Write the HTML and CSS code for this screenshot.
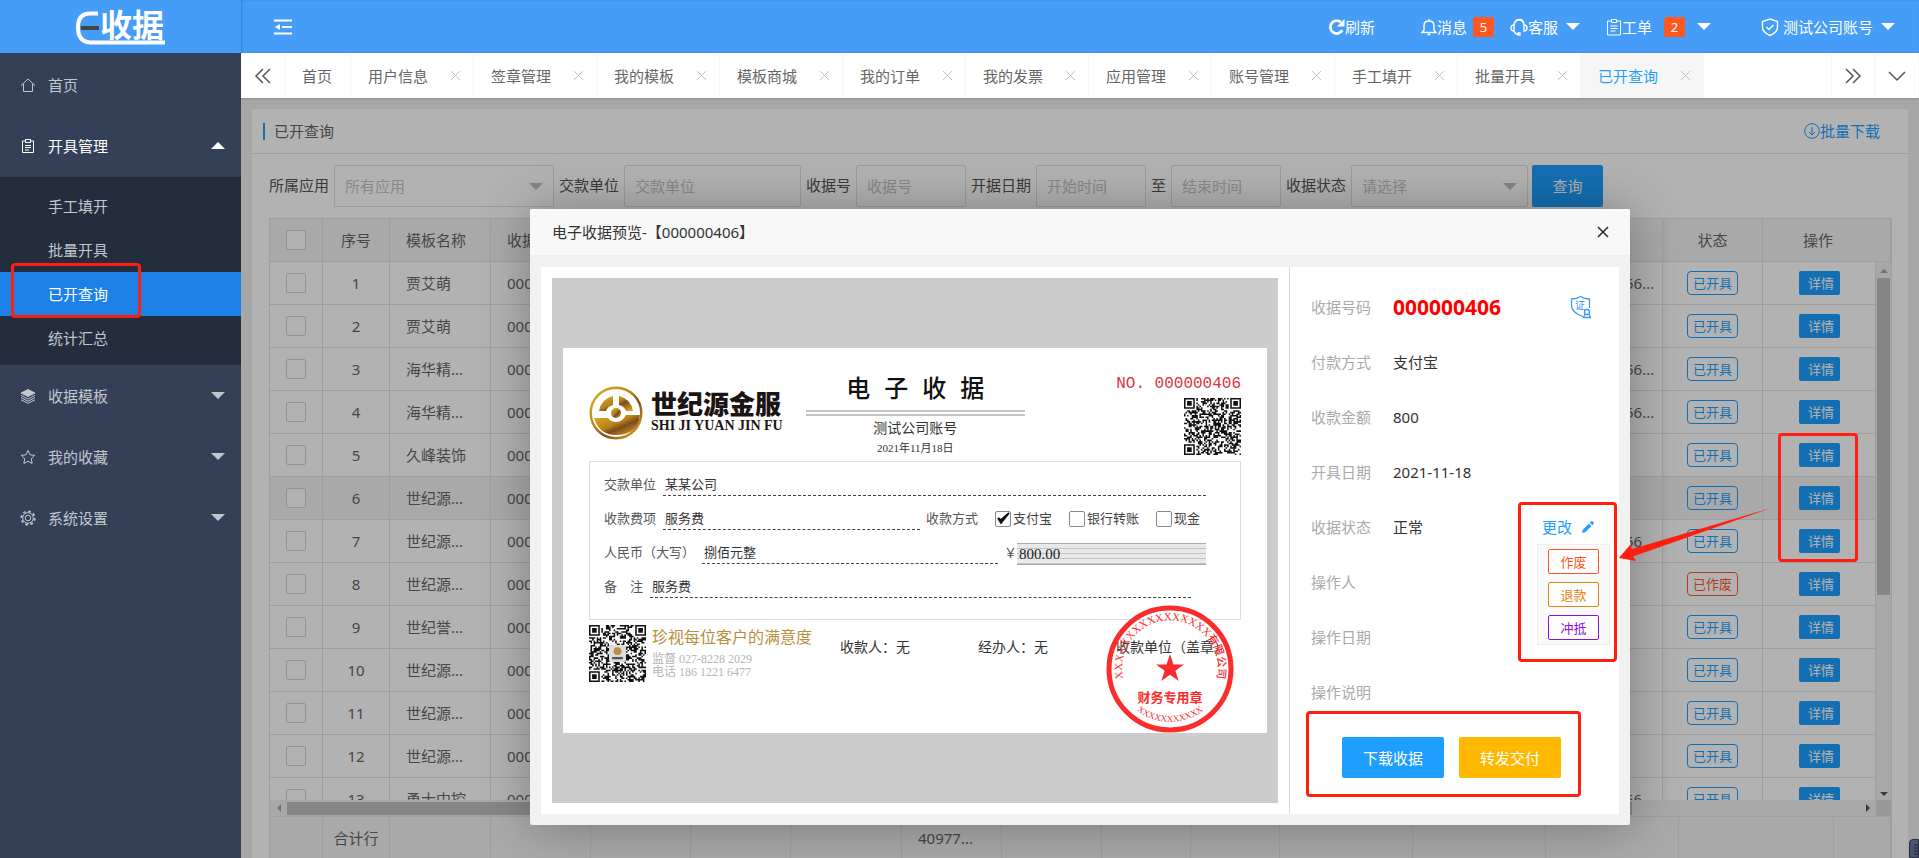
FILE: index.html
```html
<!DOCTYPE html>
<html lang="zh-CN">
<head>
    <meta charset="UTF-8">
    <meta name="viewport" content="width=device-width, initial-scale=1.0">
    <title>E收据</title>
    <link rel="stylesheet" href="styles.css">
</head>
<body>
    <aside class="side">
        <div class="logo">
            <svg width="92" height="36" viewBox="0 0 92 36">
                <path d="M23 3.500H15Q3 3.500 3 17.500T15 32.500H90" fill="none" stroke="#fff" stroke-width="4"/>
                <path d="M6 18H24" stroke="#444" stroke-width="4"/>
                <text x="25" y="27" class="logo-text">收据</text>
            </svg>
        </div>
        <nav class="menu">
            <a class="menu-item" href="#">
                <svg width="16" height="16" viewBox="0 0 16 16"><path d="M1 8.500 8 2l7 6.500M3.500 7v7.500h9V7"/></svg>
                <span>首页</span>
            </a>
            <a class="menu-item open" href="#">
                <svg width="16" height="16" viewBox="0 0 16 16"><path d="M5 3H2.500v11.500h11V3H11M5.500 1.500h5v3h-5zM5 7.500h6M5 9.500h6M5 12h4"/></svg>
                <span>开具管理</span><i class="caret up"></i>
            </a>
            <div class="sub">
                <a href="#">手工填开</a>
                <a href="#">批量开具</a>
                <a class="active" href="#">已开查询</a>
                <a href="#">统计汇总</a>
            </div>
            <a class="menu-item" href="#">
                <svg width="16" height="16" viewBox="0 0 16 16"><path d="M8 1.500 15 5 8 8.500 1 5z" fill="currentColor"/><path d="M1 7.500 8 11l7-3.500M1 9.700l7 3.500 7-3.500M1 11.800l7 3.500 7-3.500"/></svg>
                <span>收据模板</span><i class="caret"></i>
            </a>
            <a class="menu-item" href="#">
                <svg width="16" height="16" viewBox="0 0 16 16"><path d="m8 1.500 2 4.300 4.700.6-3.400 3.300.8 4.800L8 12.200l-4.100 2.300.8-4.800L1.300 6.400 6 5.800z"/></svg>
                <span>我的收藏</span><i class="caret"></i>
            </a>
            <a class="menu-item" href="#">
                <svg width="16" height="16" viewBox="0 0 16 16"><circle cx="8" cy="8" r="2.800"/><circle cx="8" cy="8" r="5.300"/><circle cx="8" cy="8" r="6.700" stroke-width="1.800" stroke-dasharray="2.600 2.660"/></svg>
                <span>系统设置</span><i class="caret"></i>
            </a>
        </nav>
        <div class="mark mark-menu"></div>
    </aside>

    <div class="main">
        <header class="top">
            <button class="fold" aria-label="收起菜单">
                <svg width="18" height="16" viewBox="0 0 18 16"><path d="M0 1.500h18M8 8h10M0 14.500h18" stroke="#fff" stroke-width="2"/><path d="M1 8l5-3v6z" fill="#fff"/></svg>
            </button>
            <div class="top-links">
                <a class="refresh" href="#"><svg width="17" height="18" viewBox="0 0 17 18"><path d="M14.300 12.300A6.400 6.400 0 1 1 13 4.300" stroke-width="2.800"/><path d="M16.500 1v7.500H9z" fill="#fff" stroke="none"/></svg>刷新</a>
                <a class="message" href="#"><svg width="16" height="18" viewBox="0 0 16 18"><path d="M1 14.500h14l-2-2.500V7.500Q13 3 8 3T3 7.500V12zM8 3V1M6.500 16.500h3" stroke-width="1.400"/></svg>消息<b class="badge">5</b></a>
                <a class="service" href="#"><svg width="18" height="18" viewBox="0 0 18 18"><path d="M4 7a5 5 0 0 1 10 0M4 7Q1 7 1 10t3 3zM14 7q3 0 3 3t-3 3zM4.500 7Q4 2 9 1.500T14 7M4 13q1 3 4 3.500M8 15h2v2H8z" stroke-width="1.400"/></svg>客服<i class="caret"></i></a>
                <a class="order" href="#"><svg width="16" height="18" viewBox="0 0 16 18"><path d="M5 3H1.500v14h13V3H11M5.500 1.500h5v3h-5zM4.500 8h7M4.500 10.500h7M4.500 13h5"/></svg>工单<b class="badge">2</b><i class="caret"></i></a>
                <a class="account" href="#"><svg width="18" height="18" viewBox="0 0 18 18"><path d="M9 1l7.500 2.500V9q0 5.500-7.500 8.500Q1.500 14.500 1.500 9V3.500zM5.500 9l2.500 2.500L12.500 7" stroke-width="1.400"/></svg><span>测试公司账号</span><i class="caret"></i></a>
            </div>
        </header>

        <nav class="tabs">
            <button class="tab-ctrl" aria-label="向左"><svg width="18" height="16" viewBox="0 0 18 16"><path d="M9 1 2 8l7 7M16 1 9 8l7 7"/></svg></button>
            <div class="tab home"><a href="#">首页</a></div>
            <div class="tab"><a href="#">用户信息</a><button aria-label="关闭"></button></div>
            <div class="tab"><a href="#">签章管理</a><button aria-label="关闭"></button></div>
            <div class="tab"><a href="#">我的模板</a><button aria-label="关闭"></button></div>
            <div class="tab"><a href="#">模板商城</a><button aria-label="关闭"></button></div>
            <div class="tab"><a href="#">我的订单</a><button aria-label="关闭"></button></div>
            <div class="tab"><a href="#">我的发票</a><button aria-label="关闭"></button></div>
            <div class="tab"><a href="#">应用管理</a><button aria-label="关闭"></button></div>
            <div class="tab"><a href="#">账号管理</a><button aria-label="关闭"></button></div>
            <div class="tab"><a href="#">手工填开</a><button aria-label="关闭"></button></div>
            <div class="tab"><a href="#">批量开具</a><button aria-label="关闭"></button></div>
            <div class="tab current"><a href="#">已开查询</a><button aria-label="关闭"></button></div>
            <button class="tab-ctrl right" aria-label="向右"><svg width="18" height="16" viewBox="0 0 18 16"><path d="m2 1 7 7-7 7M9 1l7 7-7 7"/></svg></button>
            <button class="tab-ctrl" aria-label="更多"><svg width="18" height="16" viewBox="0 0 18 16"><path d="m1 4 8 8 8-8"/></svg></button>
        </nav>

        <div class="frame">
            <section class="card">
                <div class="card-head">
                    <h1>已开查询</h1>
                    <a href="#"><svg width="16" height="16" viewBox="0 0 16 16"><circle cx="8" cy="8" r="7.300"/><path d="M8 4v8M5 9l3 3 3-3"/></svg>批量下载</a>
                </div>
                <form class="filter">
                    <label for="app">所属应用</label>
                    <span class="select wide"><select id="app"><option>所有应用</option></select></span>
                    <label for="payer">交款单位</label>
                    <input class="mid" id="payer" type="text" placeholder="交款单位">
                    <label for="no">收据号</label>
                    <input id="no" type="text" placeholder="收据号">
                    <label for="from">开据日期</label>
                    <input id="from" type="text" placeholder="开始时间">
                    <label for="to">至</label>
                    <input id="to" type="text" placeholder="结束时间">
                    <label for="state">收据状态</label>
                    <span class="select mid"><select id="state"><option>请选择</option></select></span>
                    <button type="button">查询</button>
                </form>

                <div class="grid">
                    <table class="grid-head">
                        <colgroup><col class="w53"><col class="w67"><col class="w101"><col class="w100"><col><col class="w54"><col class="w100"><col class="w128"></colgroup>
                        <tr><th><input type="checkbox" aria-label="全选"></th><th>序号</th><th class="left">模板名称</th><th class="left">收据号</th><th></th><th></th><th class="fixed">状态</th><th class="op">操作</th></tr>
                    </table>
                    <div class="grid-body">
                        <div class="grid-scroll">
                            <table>
                                <colgroup><col class="w53"><col class="w67"><col class="w101"><col class="w100"><col><col class="w54"><col class="w100"><col class="w113"></colgroup>
                                <tbody id="rows"></tbody>
                            </table>
                        </div>
                        <div class="bar-v"><i class="tri t-up"></i><div class="thumb"></div><i class="tri t-down"></i></div>
                    </div>
                    <div class="bar-h"><i class="tri t-left"></i><div class="thumb"></div><i class="tri t-right"></i><div class="corner"></div></div>
                    <table class="total">
                        <colgroup><col class="w53"><col class="w67"><col class="w101"><col class="w100"><col class="w100"><col class="w100"><col class="w111"><col class="w100"><col class="w100"><col class="w89"><col class="w89"><col class="w133"><col class="w133"><col class="w133"><col class="w155"><col></colgroup>
                        <tr><td></td><td>合计行</td><td></td><td></td><td></td><td></td><td></td><td class="left">40977...</td><td></td><td></td><td></td><td></td><td></td><td></td><td></td><td></td></tr>
                    </table>
                </div>
            </section>

            <div class="mask">
                <div class="dialog" role="dialog" aria-labelledby="dlg-title">
                    <div class="dialog-head">
                        <h2 id="dlg-title">电子收据预览-【000000406】</h2>
                        <button aria-label="关闭"><svg width="12" height="12" viewBox="0 0 12 12"><path d="m1 1 10 10M11 1 1 11" stroke="#2e2d3c" stroke-width="1.600"/></svg></button>
                    </div>
                    <div class="dialog-body">
                        <div class="preview">
                            <div class="preview-bg">
                                <div class="paper">
                                    <div class="paper-head">
                                        <div class="brand">
                                            <svg width="54" height="54" viewBox="0 0 54 54">
                                                <defs><linearGradient id="gold" x1="0" y1="0" x2="1" y2="1"><stop offset="0" stop-color="#e3b21c"/><stop offset=".45" stop-color="#b5821c"/><stop offset=".6" stop-color="#7d4a1c"/><stop offset="1" stop-color="#e8b21e"/></linearGradient></defs>
                                                <circle cx="27" cy="27" r="25.300" fill="none" stroke="url(#gold)" stroke-width="2.400"/>
                                                <path d="M10 25Q12 13 24 10v9q-5 1-7 6zM44 25Q42 13 30 10v9q5 1 7 6z" fill="url(#gold)"/>
                                                <path d="M5 32h14q3 4 8 4t8-4l2-3h14q-2 20-24 20Q10 49 5 32z" fill="url(#gold)"/>
                                                <circle cx="27" cy="27" r="5" fill="url(#gold)"/>
                                            </svg>
                                            <div><strong>世纪源金服</strong><em>SHI JI YUAN JIN FU</em></div>
                                        </div>
                                        <div class="paper-title">
                                            <h3><span>电</span><span>子</span><span>收</span><span>据</span></h3>
                                            <div class="rule"></div>
                                            <p>测试公司账号</p>
                                            <small>2021年11月18日</small>
                                        </div>
                                        <div class="paper-no">
                                            <span>NO. 000000406</span>
                                            <svg class="qr" width="57" height="57" viewBox="0 0 37 37"><path id="qr1"/></svg>
                                        </div>
                                    </div>
                                    <div class="paper-form">
                                        <div class="line"><span>交款单位</span><u>某某公司</u></div>
                                        <div class="line">
                                            <span>收款费项</span><u>服务费</u><span class="way">收款方式</span>
                                            <span class="opt"><i class="box"><svg width="14" height="14" viewBox="0 0 14 14"><path d="m2 6 3 5 8-10-8 7z" stroke="#111" stroke-width="1.800" fill="#111"/></svg></i>支付宝</span>
                                            <span class="opt"><i class="box"></i>银行转账</span>
                                            <span class="opt last"><i class="box"></i>现金</span>
                                        </div>
                                        <div class="line"><span>人民币（大写）</span><u>捌佰元整</u><span class="yen">￥</span><span class="sum">800.00</span></div>
                                        <div class="line note"><span>备&emsp;注</span><u>服务费</u></div>
                                    </div>
                                    <div class="paper-foot">
                                        <svg class="qr" width="57" height="57" viewBox="0 0 37 37"><path id="qr2"/><rect x="13" y="13" width="11" height="11" rx="1" fill="#ddd"/><circle cx="18.500" cy="17" r="2.500" fill="#b5913f"/><path d="M15 21.500h7" stroke="#555" stroke-width="1.500"/></svg>
                                        <div class="slogan"><b>珍视每位客户的满意度</b><span>监督 027-8228 2029</span><span>电话 186 1221 6477</span></div>
                                        <span class="sign first">收款人：无</span><span class="sign">经办人：无</span><span class="sign">收款单位（盖章）</span>
                                    </div>
                                    <svg class="stamp" width="128" height="128" viewBox="0 0 128 128">
                                        <defs>
                                            <path id="arcTop" d="M18 77A48 48 0 1 1 110 77"/>
                                            <path id="arcBottom" d="M23 98A54 54 0 0 0 105 98"/>
                                        </defs>
                                        <circle cx="64" cy="64" r="61" fill="none" stroke="#fb2c2c" stroke-width="5"/>
                                        <text class="stamp-arc" text-anchor="middle"><textPath href="#arcTop" startOffset="50%">XXXXXXXXXXXXXXXX有限公司</textPath></text>
                                        <text class="stamp-code" text-anchor="middle"><textPath href="#arcBottom" startOffset="50%">XXXXXXXXXXX</textPath></text>
                                        <path d="m64 49 3.500 10.500h10.500l-8.600 6.300 3.300 10.200-8.700-6.300-8.700 6.300 3.300-10.200-8.600-6.300h10.500z" fill="#fb2c2c"/>
                                        <text class="stamp-name" x="64" y="97" text-anchor="middle">财务专用章</text>
                                    </svg>
                                </div>
                            </div>
                        </div>
                        <div class="detail">
                            <dl>
                                <div><dt>收据号码</dt><dd class="big">000000406</dd>
                                    <svg class="cert" width="22" height="24" viewBox="0 0 22 24"><path d="M13 21.500Q1.500 18 1.500 10V4Q7 4 10.500 1.500 14 4 19.500 4v9"/><text x="5" y="14">证</text><circle cx="17" cy="17" r="2.500"/><path d="M15 19l-1.500 3.500H20.500L19 19"/></svg></div>
                                <div><dt>付款方式</dt><dd>支付宝</dd></div>
                                <div><dt>收款金额</dt><dd>800</dd></div>
                                <div><dt>开具日期</dt><dd>2021-11-18</dd></div>
                                <div><dt>收据状态</dt><dd>正常</dd>
                                    <button class="change">更改<svg width="12" height="12" viewBox="0 0 12 12"><path d="m0 12 .8-3.200L7 2.500 9.500 5 3.200 11.200zM7.800 1.700 9 .5q.8-.8 1.700 0l.8.8q.8.900 0 1.700l-1.200 1.200z" fill="#1e9fff"/></svg></button></div>
                                <div><dt>操作人</dt><dd></dd></div>
                                <div><dt>操作日期</dt><dd></dd></div>
                                <div><dt>操作说明</dt><dd></dd></div>
                            </dl>
                            <div class="actions"><button>下载收据</button><button class="warm">转发交付</button></div>
                        </div>
                    </div>
                    <div class="change-menu"><button class="void">作废</button><button class="refund">退款</button><button class="offset">冲抵</button></div>
                    <div class="mark mark-change"></div>
                    <div class="mark mark-actions"></div>
                    <div class="mark mark-rows"></div>
                    <svg class="arrow" width="153" height="54" viewBox="0 0 153 54"><path d="M0 50 11 37l2 4L152 0 14 48.500l3 4.500z" fill="#ff1e10"/></svg>
                </div>
            </div>
            <div class="dock"><svg width="4" height="12" viewBox="0 0 4 12"><path d="M0 1h4M0 4h4M0 7h4M0 10h4" stroke="#1f2433"/></svg></div>
        </div>
    </div>
    <script src="app.js"></script>
</body>
</html>
```
FILE: styles.css
```css
* {
    box-sizing: border-box;
}

body {
    margin: 0;
    height: 100vh;
    display: flex;
    overflow: hidden;
    font-family: "Noto Sans", "Noto Sans CJK SC", sans-serif;
    font-size: 15px;
    line-height: 22px;
    color: #666;
    background: #f0f0f0;
}

a {
    color: inherit;
    text-decoration: none;
}

button, input, select {
    font: inherit;
    margin: 0;
}

button {
    border: 0;
    padding: 0;
    background: none;
    cursor: pointer;
}

svg {
    flex: none;
    fill: none;
    overflow: visible;
}

.caret {
    width: 0;
    height: 0;
    border: 7px solid transparent;
    border-top-color: currentColor;
    border-bottom: 0;
}

.caret.up {
    border-top: 0;
    border-bottom: 7px solid currentColor;
}

/* sidebar */
.side {
    position: relative;
    flex: none;
    width: 241px;
    background: #344058;
    color: #c2c6cd;
}

.logo {
    height: 53px;
    padding: 10px 0 0 75px;
    background: #459df8;
}

.logo-text {
    font-size: 32px;
    font-weight: 700;
    fill: #fff;
}

.menu {
    padding-top: 1px;
}

.menu-item {
    display: flex;
    align-items: center;
    gap: 12px;
    height: 61px;
    padding: 0 16px 0 20px;
}

.menu-item svg {
    stroke: currentColor;
}

.menu-item.open {
    color: #fff;
}

.menu-item .caret {
    margin-left: auto;
}

.sub {
    padding: 7px 0 5px;
    margin-top: 1px;
    background: #242d3d;
}

.sub a {
    display: block;
    line-height: 44px;
    padding-left: 48px;
}

.sub .active {
    background: #1c80e6;
    color: #fff;
}

/* header */
.main {
    flex: 1;
    min-width: 0;
    display: flex;
    flex-direction: column;
}

.top {
    flex: none;
    display: flex;
    align-items: center;
    justify-content: space-between;
    height: 53px;
    padding: 0 24px 0 33px;
    background: #459df8;
    color: #fff;
    box-shadow: inset 1px 0 2px rgba(0, 0, 0, .2);
}

.fold svg {
    display: block;
}

.top-links, .top-links a {
    display: flex;
    align-items: center;
}

.top-links svg {
    stroke: #fff;
}

.message {
    margin-left: 46px;
}

.service {
    margin-left: 16px;
}

.order {
    margin-left: 26px;
}

.account {
    margin-left: 50px;
}

.account span {
    margin-left: 4px;
}

.top-links .caret {
    margin-left: 8px;
}

.badge {
    width: 21px;
    margin-left: 6px;
    border-radius: 2px;
    background: #ff5722;
    font-size: 13px;
    font-weight: normal;
    line-height: 20px;
    text-align: center;
}

.order .badge, .order .caret {
    margin-left: 12px;
}

/* tabs */
.tabs {
    position: relative;
    z-index: 2;
    flex: none;
    display: flex;
    height: 45px;
    background: #fff;
    box-shadow: 0 1px 2px rgba(0, 0, 0, .15);
}

.tab {
    display: flex;
    align-items: center;
    justify-content: space-between;
    width: 123px;
    padding: 0 12px 0 17px;
    border-right: 1px solid #f6f6f6;
}

.tab.home {
    width: 66px;
}

.tab button {
    width: 12px;
    height: 12px;
    background: linear-gradient(45deg, transparent 46%, #c2c2c2 46% 54%, transparent 54%), linear-gradient(-45deg, transparent 46%, #c2c2c2 46% 54%, transparent 54%);
    background-size: 9px 9px;
    background-position: center;
    background-repeat: no-repeat;
}

.tab.current {
    background: #f6f6f6;
    color: #1e9fff;
}

.tab-ctrl {
    width: 44px;
    border-right: 1px solid #f6f6f6;
}

.tab-ctrl svg {
    display: block;
    margin: 0 auto;
    stroke: #555;
    stroke-width: 1.5;
}

.tab-ctrl.right {
    margin-left: auto;
    border-left: 1px solid #f6f6f6;
}

/* page below the dialog */
.frame {
    position: relative;
    flex: 1;
    min-height: 0;
    overflow: hidden;
    padding: 11px 11px 0;
    display: flex;
}

.card {
    flex: 1;
    min-width: 0;
    display: flex;
    flex-direction: column;
    background: #fff;
}

.card-head {
    flex: none;
    display: flex;
    align-items: center;
    justify-content: space-between;
    height: 45px;
    padding: 0 28px 0 11px;
    border-bottom: 1px solid #e6e6e6;
}

.card-head h1 {
    margin: 0;
    padding-left: 9px;
    border-left: 2px solid #1e9fff;
    font-size: 15px;
    font-weight: normal;
    line-height: 17px;
}

.card-head a {
    display: flex;
    align-items: center;
    color: #1e9fff;
}

.card-head svg {
    stroke: #1e9fff;
}

.filter {
    flex: none;
    display: flex;
    align-items: center;
    gap: 4px;
    padding: 11px 16px;
}

.filter label {
    padding: 0 1px;
    margin-bottom: 2px;
    color: #555;
    white-space: nowrap;
}

.filter input, .filter select {
    width: 110px;
    height: 42px;
    padding: 0 10px;
    border: 1px solid #dedede;
    border-radius: 2px;
    background: #fff;
    color: #c4c4c4;
}

.filter ::placeholder {
    color: #c4c4c4;
}

.filter .mid {
    width: 177px;
}

.filter .wide {
    width: 220px;
}

.select {
    position: relative;
}

.filter .select select {
    display: block;
    width: 100%;
    appearance: none;
}

.select::after {
    content: "";
    position: absolute;
    right: 11px;
    top: 18px;
    border: 7px solid transparent;
    border-top-color: #bfbfbf;
    border-bottom: 0;
}

.filter button {
    width: 71px;
    height: 42px;
    border-radius: 2px;
    background: #1e9fff;
    color: #fff;
}

.grid {
    flex: 1;
    min-height: 0;
    display: flex;
    flex-direction: column;
    margin: 0 16px 0 17px;
    border: 1px solid #e2e2e2;
    border-bottom: 0;
}

.grid table {
    flex: none;
    width: 100%;
    border-collapse: separate;
    border-spacing: 0;
    table-layout: fixed;
}

.w53 { width: 53px; }
.w54 { width: 54px; }
.w67 { width: 67px; }
.w89 { width: 89px; }
.w100 { width: 100px; }
.w101 { width: 101px; }
.w111 { width: 111px; }
.w113 { width: 113px; }
.w128 { width: 128px; }
.w133 { width: 133px; }
.w155 { width: 155px; }

.grid th, .grid td {
    height: 43px;
    padding: 0;
    border-right: 1px solid #e2e2e2;
    border-bottom: 1px solid #e2e2e2;
    font-weight: normal;
    text-align: center;
    white-space: nowrap;
    overflow: hidden;
}

.grid .total td {
    height: 41px;
    border-bottom: 0;
}

.grid .left {
    padding-left: 16px;
    text-align: left;
}

.grid .plain {
    border-right: 0;
}

.grid .fixed {
    box-shadow: inset 5px 0 6px -4px rgba(0, 0, 0, .06);
}

.grid-head th, .total td {
    background: #f2f2f2;
}

.grid-head .op {
    padding-right: 17px;
}

.grid .hover td {
    background: #f2f2f2;
}

.grid input {
    display: block;
    width: 20px;
    height: 20px;
    margin: 0 auto;
    appearance: none;
    border: 1px solid #d2d2d2;
    border-radius: 2px;
    background: #fff;
}

.grid-body {
    flex: 1;
    min-height: 0;
    display: flex;
}

.grid-scroll {
    flex: 1;
    overflow: hidden;
}

.tag {
    display: inline-block;
    width: 51px;
    border: 1px solid #1e9fff;
    border-radius: 4px;
    color: #1e9fff;
    font-size: 13px;
    line-height: 22px;
}

.tag.void {
    border-color: #ff5722;
    color: #ff5722;
}

.more {
    width: 41px;
    height: 24px;
    padding-left: 4px;
    border-radius: 2px;
    background: #1e9fff;
    color: #fff;
    font-size: 13px;
}

.bar-v {
    width: 15px;
    display: flex;
    flex-direction: column;
    align-items: center;
    background: #f1f1f1;
}

.bar-v .thumb {
    width: 13px;
    height: 59%;
    margin-top: 5px;
    background: #c1c1c1;
}

.bar-h {
    flex: none;
    display: flex;
    align-items: center;
    height: 17px;
    background: #f1f1f1;
    border-bottom: 1px solid #e2e2e2;
}

.bar-h .thumb {
    width: 83%;
    height: 13px;
    margin-left: 6px;
    background: #c1c1c1;
}

.corner {
    width: 15px;
    height: 16px;
    background: #dcdcdc;
}

.tri {
    flex: none;
    border: 4px solid transparent;
}

.t-up {
    margin-top: 3px;
    border-bottom-color: #a3a3a3;
}

.t-down {
    margin: auto 0 0;
    border-top-color: #505050;
}

.t-left {
    margin-left: 3px;
    border-right-color: #a3a3a3;
}

.t-right {
    margin: 0 2px 0 auto;
    border-left-color: #505050;
}

/* dialog */
.mask {
    position: absolute;
    inset: 0;
    display: flex;
    justify-content: center;
    align-items: flex-start;
    padding-top: 111px;
    background: rgba(0, 0, 0, .3);
}

.dialog {
    position: relative;
    flex: none;
    width: 1100px;
    border-radius: 2px;
    background: #f1f1f1;
    box-shadow: 1px 1px 50px rgba(0, 0, 0, .3);
}

.dialog-head {
    display: flex;
    align-items: center;
    justify-content: space-between;
    height: 47px;
    padding: 0 21px 0 22px;
    border-bottom: 1px solid #eee;
    border-radius: 2px 2px 0 0;
    background: #f8f8f8;
}

.dialog-head h2 {
    margin: 0;
    font-size: 15px;
    font-weight: normal;
    color: #333;
}

.dialog-head svg {
    display: block;
}

.dialog-body {
    display: flex;
    padding: 11px;
}

.preview {
    flex: 1;
    padding: 11px;
    border-right: 1px solid #d8d8d8;
    background: #fff;
}

.preview-bg {
    padding: 70px 11px;
    background: #ccc;
}

.paper {
    position: relative;
    height: 385px;
    padding: 0 26px;
    background: #fff;
    color: #555;
    font-family: "Liberation Serif", "Noto Sans CJK SC", serif;
    font-size: 14px;
    line-height: 20px;
}

.paper-head {
    display: flex;
    height: 113px;
}

.brand {
    display: flex;
    align-items: center;
    gap: 8px;
    height: 54px;
    margin-top: 38px;
    color: #1c1414;
}

.brand strong, .brand em {
    display: block;
    font-style: normal;
    white-space: nowrap;
}

.brand strong {
    font-size: 26px;
    font-weight: 900;
    line-height: 26px;
}

.brand em {
    font-size: 14px;
    font-weight: bold;
    line-height: 14px;
}

.paper-title {
    width: 219px;
    margin-left: 23px;
    padding-top: 26px;
    text-align: center;
}

.paper-title h3 {
    display: flex;
    justify-content: center;
    gap: 14px;
    margin: 0 0 6px;
    font-size: 24px;
    font-weight: 500;
    line-height: 30px;
    color: #111;
}

.rule {
    height: 6px;
    border: solid #c4c4c4;
    border-width: 2px 0;
}

.paper-title p {
    margin: 2px 0 0;
    line-height: 22px;
    color: #333;
}

.paper-title small {
    display: block;
    font-size: 11px;
    line-height: 16px;
    color: #333;
}

.paper-no {
    display: flex;
    flex-direction: column;
    align-items: flex-end;
    gap: 4px;
    margin-left: auto;
    padding-top: 26px;
    font-family: "Liberation Mono", monospace;
    font-size: 16px;
    color: #e0323c;
    white-space: nowrap;
}

.qr path {
    fill: #111;
}

.paper-form {
    height: 159px;
    padding: 13px 34px 0 14px;
    border: 1px solid #ddd;
}

.line {
    display: flex;
    height: 34px;
    line-height: 20px;
    white-space: nowrap;
    font-size: 13px;
}

.line u {
    flex: 1;
    height: 21px;
    margin-left: 7px;
    padding-left: 2px;
    border-bottom: 1px dashed #444;
    text-decoration: none;
    color: #333;
}

.line.note {
    padding-right: 15px;
}

.line .way {
    margin: 0 0 0 6px;
}

.opt {
    display: flex;
    align-items: center;
    height: 20px;
    gap: 2px;
    margin-left: 17px;
    color: #444;
}

.opt.last {
    margin-right: 6px;
}

.box {
    display: block;
    width: 16px;
    height: 16px;
    border: 1px solid #888;
    border-radius: 2px;
}

.box svg {
    display: block;
}

.yen {
    margin-left: 6px;
}

.sum {
    width: 189px;
    height: 22px;
    padding-left: 2px;
    border-top: 1px solid #aaa;
    border-bottom: 1px solid #aaa;
    background: repeating-linear-gradient(#e9e9e9 0 4px, #c4c4c4 4px 5px);
    color: #222;
    font-size: 15px;
}

.paper-foot {
    display: flex;
    padding-top: 5px;
    white-space: nowrap;
}

.slogan {
    width: 162px;
    margin-left: 6px;
}

.slogan b, .slogan span {
    display: block;
}

.slogan b {
    margin: 2px 0 4px;
    font-size: 16px;
    font-weight: 400;
    line-height: 22px;
    color: #b98f3c;
}

.slogan span {
    font-size: 12px;
    line-height: 13px;
    color: #b5b5b5;
}

.sign {
    margin: 13px 0 0 68px;
    color: #333;
}

.sign.first {
    margin-left: 26px;
}

.stamp {
    position: absolute;
    right: 33px;
    bottom: 0;
}

.stamp text {
    fill: #fb2c2c;
}

.stamp-arc {
    font-size: 11px;
    font-weight: 500;
}

.stamp-code {
    font-size: 9px;
}

.stamp-name {
    font-size: 13px;
    font-weight: bold;
}

.detail {
    width: 329px;
    padding: 12px 25px 0 21px;
    background: #fff;
}

.detail dl {
    margin: 0;
}

.detail dl > div {
    display: flex;
    align-items: center;
    height: 55px;
}

.detail dt {
    width: 82px;
    color: #aaa;
}

.detail dd {
    margin: 0;
    color: #333;
}

.detail .big {
    font-size: 21px;
    font-weight: bold;
    color: #f00;
}

.cert {
    margin: 0 2px 0 auto;
    stroke: #3f97f6;
    stroke-width: 1.3;
}

.cert text {
    font-size: 10px;
    stroke: none;
    fill: #3f97f6;
}

.change {
    display: flex;
    align-items: center;
    gap: 10px;
    margin-left: auto;
    color: #1e9fff;
}

.actions {
    display: flex;
    gap: 15px;
    margin: 18px 0 0 31px;
}

.actions button {
    width: 102px;
    height: 41px;
    border-radius: 2px;
    background: #1e9fff;
    color: #fff;
}

.actions .warm {
    background: #ffb800;
}

.change-menu {
    position: absolute;
    left: 1007px;
    top: 335px;
    display: flex;
    flex-direction: column;
    align-items: center;
    gap: 8px;
    width: 73px;
    padding: 4px 0;
    border: 1px solid #eee;
    background: #f9f9f9;
}

.change-menu button {
    width: 51px;
    height: 25px;
    border: 1px solid;
    border-radius: 2px;
    background: #fff;
    font-size: 13px;
    line-height: 20px;
}

.change-menu .void { color: #ff5722; }
.change-menu .refund { color: #df8512; }
.change-menu .offset { color: #8a10e0; }

/* red call-outs */
.mark {
    position: absolute;
    border: 3px solid #ff1e10;
    border-radius: 4px;
    pointer-events: none;
}

.mark-menu {
    left: 11px;
    top: 263px;
    width: 130px;
    height: 55px;
}

.mark-change {
    left: 988px;
    top: 293px;
    width: 99px;
    height: 160px;
}

.mark-actions {
    left: 776px;
    top: 502px;
    width: 275px;
    height: 86px;
}

.mark-rows {
    left: 1248px;
    top: 224px;
    width: 80px;
    height: 129px;
}

.arrow {
    position: absolute;
    left: 1089px;
    top: 299px;
}

.dock {
    position: absolute;
    right: 0;
    bottom: 0;
    width: 10px;
    height: 19px;
    padding: 4px 0 0 4px;
    border: 1px solid #2a3042;
    border-radius: 4px 0 0 0;
    background: #4a5470;
    line-height: 0;
}
```
FILE: app.js
```js
var names = ["贾艾萌", "贾艾萌", "海华精...", "海华精...", "久峰装饰", "世纪源...", "世纪源...", "世纪源...", "世纪誉...", "世纪源...", "世纪源...", "世纪源...", "勇士中控"];
var tails = {1: "56...", 3: "56...", 4: "56...", 7: "56", 13: "56"};

var html = "";
for (var i = 1; i <= names.length; i++) {
    var state = i == 8 ? '<span class="tag void">已作废</span>' : '<span class="tag">已开具</span>';
    html += '<tr' + (i == 6 ? ' class="hover"' : '') + '>' +
        '<td><input type="checkbox" aria-label="选择第' + i + '行"></td>' +
        '<td>' + i + '</td>' +
        '<td class="left">' + names[i - 1] + '</td>' +
        '<td class="left plain">0000...</td><td class="plain"></td>' +
        '<td class="left">' + (tails[i] || '') + '</td>' +
        '<td class="fixed">' + state + '</td>' +
        '<td><button class="more">详情</button></td></tr>';
}
document.getElementById("rows").innerHTML = html;

// 37x37 code: three finder squares, the rest filled from a seed
function drawCode(id, seed) {
    var n = 37, d = "";
    function finder(x, y) {
        var corners = [[0, 0], [n - 7, 0], [0, n - 7]];
        for (var k = 0; k < 3; k++) {
            var u = x - corners[k][0], v = y - corners[k][1];
            if (u >= -1 && u <= 7 && v >= -1 && v <= 7) {
                var r = Math.max(Math.abs(u - 3), Math.abs(v - 3));
                return r == 3 || r <= 1 ? 1 : 0;
            }
        }
        return -1;
    }
    for (var y = 0; y < n; y++) {
        for (var x = 0; x < n; x++) {
            seed = (seed * 1103515245 + 12345) % 2147483648;
            var f = finder(x, y);
            if (f == 1 || (f == -1 && seed / 2147483648 > 0.48)) {
                d += "M" + x + " " + y + "h1v1h-1z";
            }
        }
    }
    document.getElementById(id).setAttribute("d", d);
}
drawCode("qr1", 406);
drawCode("qr2", 2029);
```
